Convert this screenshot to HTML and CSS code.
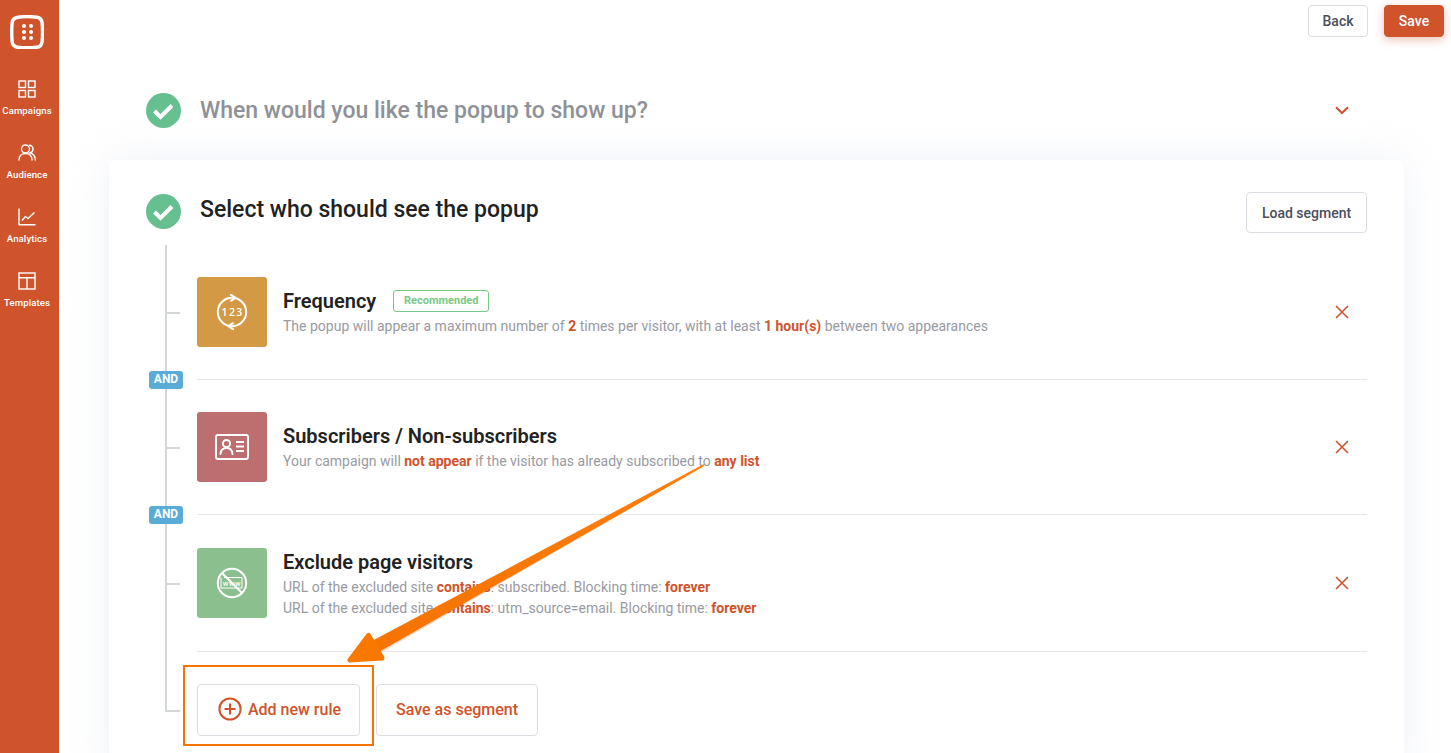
FILE: index.html
```html
<!DOCTYPE html>
<html lang="en">
<head>
<meta charset="utf-8">
<title>Popup campaign</title>
<link rel="stylesheet" href="styles.css">
</head>
<body>
<div class="app">
  <nav class="sidebar">
    <svg class="logo" width="34" height="34" viewBox="0 0 34 34" fill="none">
      <path d="M8 2.2C13 1.4 22 1.6 27 2.2C30 2.6 31.6 4.4 32 7.5C32.6 13 32.6 22 32 27C31.6 30.4 29.8 32 26.5 32.2C21 32.8 13 32.8 7.5 32.2C4.4 31.8 2.6 30 2.2 27C1.6 21 1.6 13 2.2 7.5C2.6 4.4 4.6 2.6 8 2.2Z" stroke="#fff" stroke-width="3.4"/>
      <g fill="#fff"><circle cx="14" cy="11" r="2"/><circle cx="21" cy="11" r="2"/><circle cx="14" cy="17" r="2"/><circle cx="21" cy="17" r="2"/><circle cx="14" cy="23" r="2"/><circle cx="21" cy="23" r="2"/></g>
    </svg>
    <a class="nav-item">
      <svg width="18" height="18" viewBox="0 0 18 18" fill="none" stroke="#fff" stroke-width="1.4"><rect x="1" y="1" width="6.5" height="6.5"/><rect x="10.5" y="1" width="6.5" height="6.5"/><rect x="1" y="10.5" width="6.5" height="6.5"/><rect x="10.5" y="10.5" width="6.5" height="6.5"/></svg>
      <span>Campaigns</span>
    </a>
    <a class="nav-item">
      <svg width="18" height="18" viewBox="0 0 18 18" fill="none" stroke="#fff" stroke-width="1.4" stroke-linecap="round"><circle cx="7.5" cy="5" r="4"/><path d="M1 16C1 11.5 4 9.5 7.5 9.5S14 11.5 14 16"/><path d="M11.5 1.2C13.8 1.6 15 3.2 15 5C15 7 13.8 8.4 12 9C15 9.6 17.2 12 17.3 16"/></svg>
      <span>Audience</span>
    </a>
    <a class="nav-item">
      <svg width="18" height="18" viewBox="0 0 18 18" fill="none" stroke="#fff" stroke-width="1.4" stroke-linejoin="round"><path d="M1 0.5V16.8H17.5"/><path d="M4 12.5L7.5 8.5L10 10.5L16.5 4.5"/></svg>
      <span>Analytics</span>
    </a>
    <a class="nav-item">
      <svg width="18" height="18" viewBox="0 0 18 18" fill="none" stroke="#fff" stroke-width="1.4"><rect x="1" y="1" width="16" height="16"/><path d="M1 5.8H17M9 5.8V17"/></svg>
      <span>Templates</span>
    </a>
  </nav>

  <main class="main">
    <header class="topbar">
      <button class="btn btn-top">Back</button>
      <button class="btn btn-top btn-primary">Save</button>
    </header>

    <section class="step">
      <svg class="check" width="35" height="35" viewBox="0 0 35 35"><circle cx="17.5" cy="17.5" r="17.5" fill="#66bf8f"/><path d="M8.5 18L14.5 24L26 12.5" fill="none" stroke="#fff" stroke-width="4"/></svg>
      <h2 class="step-title muted">When would you like the popup to show up?</h2>
      <svg class="chevron" width="14" height="9" viewBox="0 0 14 9" fill="none"><path d="M1 1.2L7 7L13 1.2" stroke="#cf532b" stroke-width="2"/></svg>
    </section>

    <section class="card">
      <div class="card-head">
        <svg class="check" width="35" height="35" viewBox="0 0 35 35"><circle cx="17.5" cy="17.5" r="17.5" fill="#66bf8f"/><path d="M8.5 18L14.5 24L26 12.5" fill="none" stroke="#fff" stroke-width="4"/></svg>
        <h2 class="step-title">Select who should see the popup</h2>
        <button class="btn btn-load">Load segment</button>
      </div>

      <div class="rules">
        <article class="rule">
          <div class="rule-icon icon-orange">
            <svg width="34" height="36" viewBox="0 0 34 36" fill="none" stroke="#fff" stroke-width="2" stroke-linejoin="round">
              <circle cx="17" cy="18" r="14.2"/>
              <path d="M16 0.8L20.5 3.8L16 6.8" stroke-linecap="round"/><path d="M18 29.2L13.5 32.2L18 35.2" stroke-linecap="round"/>
              <text x="17.6" y="21.6" class="icon-num">123</text>
            </svg>
          </div>
          <div class="rule-body">
            <div class="rule-title"><h3>Frequency</h3><span class="tag">Recommended</span></div>
            <p>The popup will appear a maximum number of <b>2</b> times per visitor, with at least <b>1 hour(s)</b> between two appearances</p>
          </div>
          <svg class="close" width="14" height="14" viewBox="0 0 14 14"><path d="M1 1L13 13M13 1L1 13" stroke="#cf532b" stroke-width="1.6"/></svg>
          <span class="and">AND</span>
        </article>

        <article class="rule">
          <div class="rule-icon icon-rose">
            <svg width="34" height="26" viewBox="0 0 34 26" fill="none" stroke="#fff" stroke-width="2" stroke-linecap="round">
              <rect x="1" y="1" width="32" height="24" rx="2"/>
              <circle cx="11.5" cy="9.5" r="3.6"/><path d="M5.5 20C5.8 16 8.2 14 11.5 14S17.2 16 17.5 20"/>
              <path d="M21 8H29M21 12.5H29M21 17H29" stroke-linecap="butt"/>
            </svg>
          </div>
          <div class="rule-body">
            <div class="rule-title"><h3>Subscribers / Non-subscribers</h3></div>
            <p>Your campaign will <b>not appear</b> if the visitor has already subscribed to <b>any list</b></p>
          </div>
          <svg class="close" width="14" height="14" viewBox="0 0 14 14"><path d="M1 1L13 13M13 1L1 13" stroke="#cf532b" stroke-width="1.6"/></svg>
          <span class="and">AND</span>
        </article>

        <article class="rule rule-tall">
          <div class="rule-icon icon-green">
            <svg width="32" height="32" viewBox="0 0 32 32" fill="none" stroke="#fff" stroke-width="2">
              <circle cx="16" cy="16" r="14.2"/>
              <path d="M6 6L26 26"/>
              <path d="M8 10.5H26V21H5V10.5" stroke-width="1"/>
              <text x="16" y="18.5" class="icon-www">www</text>
            </svg>
          </div>
          <div class="rule-body">
            <div class="rule-title"><h3>Exclude page visitors</h3></div>
            <p>URL of the excluded site <b>contains</b>: subscribed. Blocking time: <b>forever</b></p>
            <p>URL of the excluded site <b>contains</b>: utm_source=email. Blocking time: <b>forever</b></p>
          </div>
          <svg class="close" width="14" height="14" viewBox="0 0 14 14"><path d="M1 1L13 13M13 1L1 13" stroke="#cf532b" stroke-width="1.6"/></svg>
        </article>

        <div class="actions">
          <button class="btn btn-action btn-add">
            <svg width="24" height="24" viewBox="0 0 24 24" fill="none" stroke="#cf532b" stroke-width="2"><circle cx="12" cy="12" r="10.6"/><path d="M12 6.5V17.5M6.5 12H17.5"/></svg>
            Add new rule
          </button>
          <button class="btn btn-action btn-segment">Save as segment</button>
        </div>
      </div>
    </section>
  </main>
</div>

<div class="highlight"></div>
<svg class="arrow" width="1451" height="753" viewBox="0 0 1451 753">
  <defs><linearGradient id="arrowfill" x1="0" y1="1" x2="1" y2="0"><stop offset="0" stop-color="#f57300"/><stop offset="1" stop-color="#ff7f0a"/></linearGradient></defs>
  <path d="M704 466L379 654L368 654Z" fill="#9a5a20" opacity=".22"/>
  <path d="M704 464L703.5 466.5L378 652.5L371 641.5Z" fill="url(#arrowfill)"/>
  <path d="M368.5 635.5L350 660L382 658Z" fill="#f97800" stroke="#f97800" stroke-width="5" stroke-linejoin="round"/>
</svg>
</body>
</html>
```

FILE: styles.css
```css
* { box-sizing: border-box; }
html, body { margin: 0; height: 100%; overflow: hidden; background: #fff; }
body { font-family: Roboto, "Liberation Sans", sans-serif; color: #222; }
h2, h3, p { margin: 0; }
.app { display: flex; height: 753px; overflow: hidden; }

.sidebar { width: 59px; flex: none; background: #cf532b; display: flex; flex-direction: column; align-items: center; padding: 15px 5px 0 0; }
.logo { margin-bottom: 31px; }
.nav-item { display: flex; flex-direction: column; align-items: center; height: 64px; color: #fff; font-size: 9.6px; font-weight: 500; letter-spacing: .1px; white-space: nowrap; }
.nav-item svg { margin-bottom: 7px; }

.main { flex: 1; min-width: 0; padding: 5px 7px 0 50px; }
.topbar { display: flex; justify-content: flex-end; gap: 16px; height: 32px; }
.btn { font-family: inherit; background: #fff; border: 1px solid #dcdee3; border-radius: 4px; color: #4b4e5c; font-weight: 500; cursor: pointer; padding: 0; }
.btn-top { width: 60px; height: 32px; font-size: 14px; }
.btn-primary { background: #cf532b; border-color: #cf532b; color: #fff; box-shadow: 0 3px 10px rgba(207, 83, 43, .35); }

.step { display: flex; align-items: center; width: 1295px; margin-top: 56px; height: 35px; padding: 0 55px 0 37px; }
.check { flex: none; }
.step-title { font-size: 23px; line-height: 30px; font-weight: 500; margin-left: 19px; flex: 1; color: #222; }
.step-title.muted { color: #8e9198; padding-top: 1px; }

.card { width: 1295px; height: 620px; margin-top: 32px; padding: 32px 37px 0; background: #fff; border-radius: 6px; box-shadow: 0 0 40px rgba(220, 224, 238, .45); }
.card-head { display: flex; align-items: flex-start; height: 41px; }
.card-head .check { margin-top: 2px; }
.card-head .step-title { margin-top: 3px; }
.btn-load { width: 121px; height: 41px; font-size: 14px; }

.rules { position: relative; margin-top: 12px; padding-left: 51px; }
.rules::before { content: ""; position: absolute; left: 19px; top: 0; height: 467px; width: 2px; background: #d3d6dc; }

.rule { position: relative; display: flex; align-items: center; height: 135px; border-bottom: 1px solid #e6e7ea; }
.rule::before { content: ""; position: absolute; left: -32px; top: 67px; width: 15px; height: 2px; background: #d3d6dc; }
.rule-tall { height: 137px; }
.rule-tall::before { top: 68px; }
.rule-icon { flex: none; width: 70px; height: 70px; border-radius: 3px; display: flex; align-items: center; justify-content: center; }
.icon-orange { background: #d49945; }
.icon-rose { background: #bd6e6e; }
.icon-green { background: #8bc08e; }
.icon-num { fill: #fff; stroke: none; font-family: "Open Sans", Roboto, sans-serif; font-size: 10.5px; font-weight: 600; letter-spacing: 1.4px; text-anchor: middle; }
.icon-www { fill: #fff; stroke: none; font-family: Roboto, sans-serif; font-size: 7.5px; font-weight: 500; letter-spacing: .6px; text-anchor: middle; }

.rule-body { flex: 1; margin-left: 16px; padding-top: 1px; }
.rule-tall .rule-body { padding-top: 3px; }
.rule-title { display: flex; align-items: center; height: 24px; margin-bottom: 3px; }
.rule-title h3 { font-size: 20px; line-height: 24px; font-weight: 600; color: #222; }
.tag { margin-left: 17px; width: 96px; height: 22px; border: 1px solid #77c986; border-radius: 3px; color: #77c986; font-size: 11px; font-weight: 700; line-height: 20px; text-align: center; }
.rule-body p { font-size: 14px; line-height: 21px; color: #989aa1; }
.rule-body b { color: #cf532b; font-weight: 700; }
.close { flex: none; margin-right: 18px; }
.and { position: absolute; left: -48px; bottom: -10px; width: 34px; height: 18px; background: #5aabd6; color: #fff; border-radius: 3px; font-size: 12px; font-weight: 700; line-height: 17px; text-align: center; }

.actions { position: relative; display: flex; gap: 16px; margin-top: 32px; }
.actions::before { content: ""; position: absolute; left: -32px; top: 26px; width: 15px; height: 2px; background: #d3d6dc; }
.btn-action { height: 52px; font-size: 16px; color: #cf532b; display: flex; align-items: center; justify-content: center; padding-bottom: 2px; }
.btn-add { width: 163px; gap: 6px; padding-left: 2px; }
.btn-segment { width: 162px; }

.highlight { position: absolute; left: 183px; top: 665px; width: 191px; height: 81px; border: 2px solid #f57300; pointer-events: none; }
.arrow { position: absolute; left: 0; top: 0; pointer-events: none; }
```
